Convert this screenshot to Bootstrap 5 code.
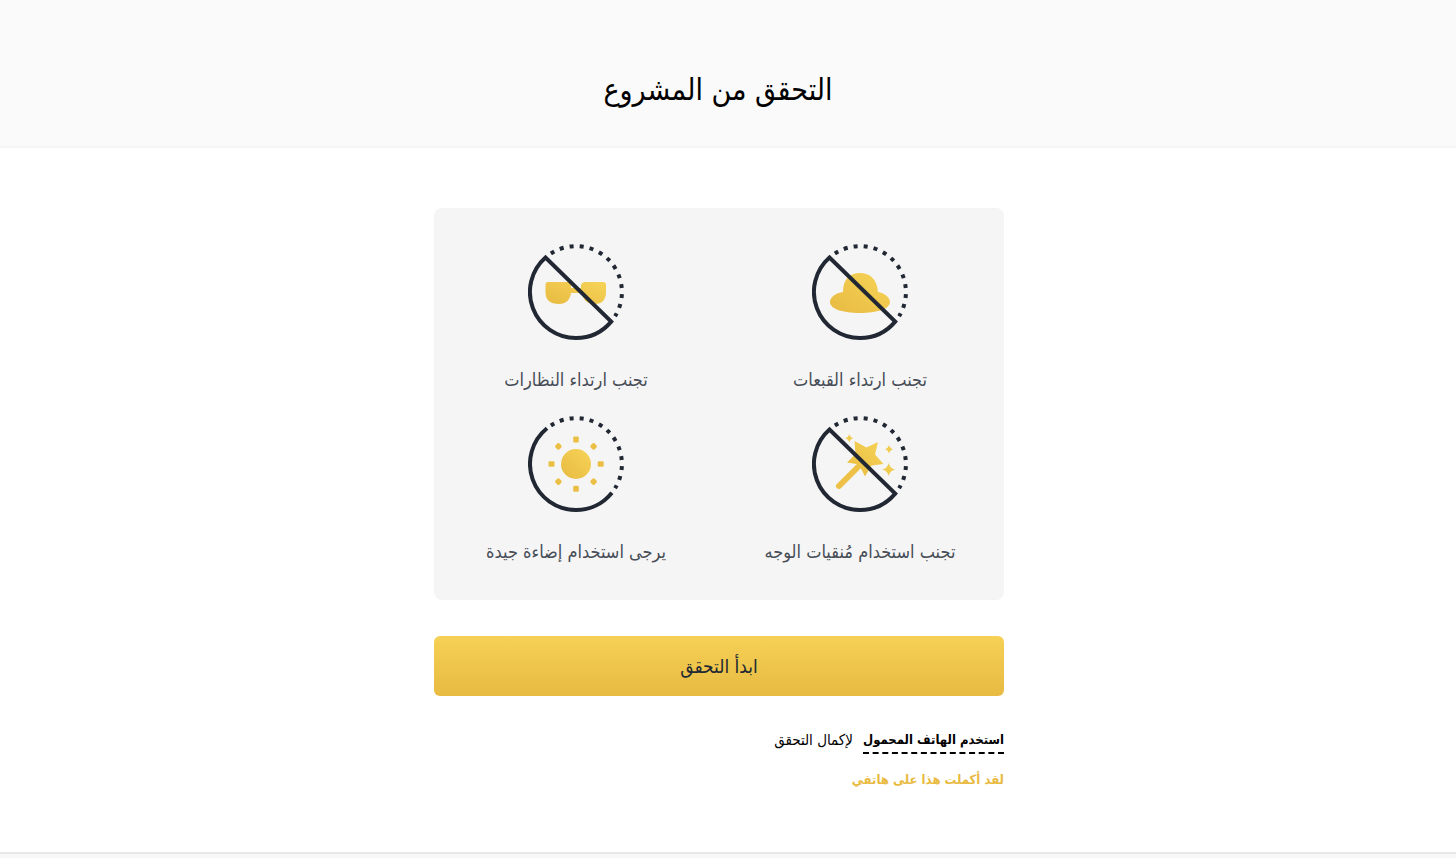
<!DOCTYPE html>
<html lang="ar" dir="rtl">
<head>
<meta charset="utf-8">
<meta name="viewport" content="width=device-width, initial-scale=1">
<title>التحقق من المشروع</title>
<link href="https://cdn.jsdelivr.net/npm/bootstrap@5.3.0/dist/css/bootstrap.min.css" rel="stylesheet">
<style>
  body { font-family: "DejaVu Sans Condensed", "Liberation Sans", Arial, sans-serif; color: #000; background: #fff; }
  .page-head { background: #fafafa; border-bottom: 2px solid #f5f5f5; padding: 68px 20px 34px 0; }
  .page-head h1 { font-size: 30px; line-height: 44px; font-weight: 500; }
  .page-main { padding: 60px 18px 60px 0; }
  .verify-col { width: 100%; max-width: 570px; }
  .tips { background: #f5f5f5; border-radius: 8px; padding: 36px 2px 32px 0; row-gap: 20px; }
  .tip-icon { width: 96px; height: 96px; display: block; }
  .tip-label { font-size: 18px; line-height: 32px; color: #474d57; margin-top: 24px; white-space: nowrap; }
  .btn-start { height: 60px; margin-top: 36px; border: 0; border-radius: 6px; color: #212833; font-size: 19px; background: linear-gradient(#f5d155, #e8ba41); }
  .btn-start:hover { color: #212833; }
  .phone-row { margin-top: 32px; font-size: 15px; line-height: 24px; gap: 10px; }
  .phone-link { color: #000; font-size: 13px; font-weight: 700; text-decoration: none; border-bottom: 2px dashed #000; }
  .done-link { color: #e8ba41; font-size: 13px; line-height: 24px; font-weight: 700; text-decoration: none; margin-top: 14px; }
  .page-foot { height: 6px; background: #f7f7f7; border-top: 2px solid #e8e8e8; }
</style>
</head>
<body>
<svg width="0" height="0" class="position-absolute" aria-hidden="true">
  <defs>
    <linearGradient id="gold" x1="1" y1="0" x2="0" y2="1"><stop offset="0" stop-color="#f6d457"/><stop offset="1" stop-color="#e8ba41"/></linearGradient>
    <g id="dots"><path d="M22.9 9.5A46 46 0 0 1 87.1 72.2" fill="none" stroke="#212833" stroke-width="4" stroke-dasharray="4 6.04"/></g>
    <g id="ban" fill="none" stroke="#212833" stroke-width="4"><path d="M17.5 13.5A46 46 0 0 0 48 94A46 46 0 0 0 83.2 77.6Z"/></g>
  </defs>
</svg>

<header class="page-head text-center"><h1 class="m-0">التحقق من المشروع</h1></header>

<main class="page-main d-flex justify-content-center">
  <div class="verify-col">
    <div class="tips row g-0 row-cols-2 text-center">
      <div class="col d-flex flex-column align-items-center">
        <svg class="tip-icon" viewBox="0 0 96 96" aria-hidden="true">
          <path fill="url(#gold)" d="M31 48C31 35 38 29 48 29S65 35 66 48C72 49 78 53 78 58C78 65 65 69 48 69S18 65 18 58C18 53 24 49 31 48Z"/>
          <use href="#dots"/><use href="#ban"/>
        </svg>
        <div class="tip-label">تجنب ارتداء القبعات</div>
      </div>
      <div class="col d-flex flex-column align-items-center">
        <svg class="tip-icon" viewBox="0 0 96 96" aria-hidden="true">
          <path fill="url(#gold)" d="M20 38H40Q43 38 43 41V44H53V41Q54 38 57 38H75Q78 38 78 41V48C78 56 74 60 67 60C59 60 55 56 54 49H43C42 56 38 60 31 60C22 60 17.500 56 17.500 48V41Q17.500 38 20 38Z"/>
          <use href="#dots"/><use href="#ban"/>
        </svg>
        <div class="tip-label">تجنب ارتداء النظارات</div>
      </div>
      <div class="col d-flex flex-column align-items-center">
        <svg class="tip-icon" viewBox="0 0 96 96" aria-hidden="true">
          <path d="M27 70L48 49" stroke="#ecc146" stroke-width="6" stroke-linecap="round"/>
          <path fill="url(#gold)" d="M42.500 25L54.500 31.500L66 26L63 38.500L71.500 48L59.500 49.500L53 60.500L47 48.500L35 46.500L43.500 38Z"/>
          <path fill="#f0cb4e" d="M37.300 18Q38 21.500 41.500 22.300Q38 23 37.300 26.500Q36.500 23 33 22.300Q36.500 21.500 37.300 18ZM77 29Q77.800 32.500 81.300 33.300Q77.800 34 77 37.500Q76.200 34 72.700 33.300Q76.200 32.500 77 29ZM76.700 47Q77.900 52.500 83.300 53.500Q77.900 54.600 76.700 60Q75.500 54.600 70 53.500Q75.500 52.500 76.700 47Z"/>
          <use href="#dots"/><use href="#ban"/>
        </svg>
        <div class="tip-label">تجنب استخدام مُنقيات الوجه</div>
      </div>
      <div class="col d-flex flex-column align-items-center">
        <svg class="tip-icon" viewBox="0 0 96 96" aria-hidden="true">
          <circle cx="48" cy="48" r="15" fill="url(#gold)"/>
          <g fill="#ebbf44">
            <rect x="45.200" y="20.500" width="5.600" height="6" rx="1.200"/><rect x="45.200" y="69.700" width="5.600" height="6" rx="1.200"/>
            <rect x="20.500" y="45.200" width="6" height="5.600" rx="1.200"/><rect x="69.700" y="45.200" width="6" height="5.600" rx="1.200"/>
            <g transform="rotate(45 48 48)"><rect x="45.200" y="20.300" width="5.600" height="5.600" rx="1.600"/><rect x="45.200" y="70.100" width="5.600" height="5.600" rx="1.600"/><rect x="20.300" y="45.200" width="5.600" height="5.600" rx="1.600"/><rect x="70.100" y="45.200" width="5.600" height="5.600" rx="1.600"/></g>
          </g>
          <use href="#dots"/>
          <path d="M19 12.300A46 46 0 0 0 48 94A46 46 0 0 0 83.900 76.700" fill="none" stroke="#212833" stroke-width="4"/>
        </svg>
        <div class="tip-label">يرجى استخدام إضاءة جيدة</div>
      </div>
    </div>
    <button type="button" class="btn btn-start w-100">ابدأ التحقق</button>
    <div class="phone-row d-flex align-items-start"><a href="#" class="phone-link">استخدم الهاتف المحمول</a><span>لإكمال التحقق</span></div>
    <div class="d-flex"><a href="#" class="done-link">لقد أكملت هذا على هاتفي</a></div>
  </div>
</main>
<footer class="page-foot"></footer>
</body>
</html>
